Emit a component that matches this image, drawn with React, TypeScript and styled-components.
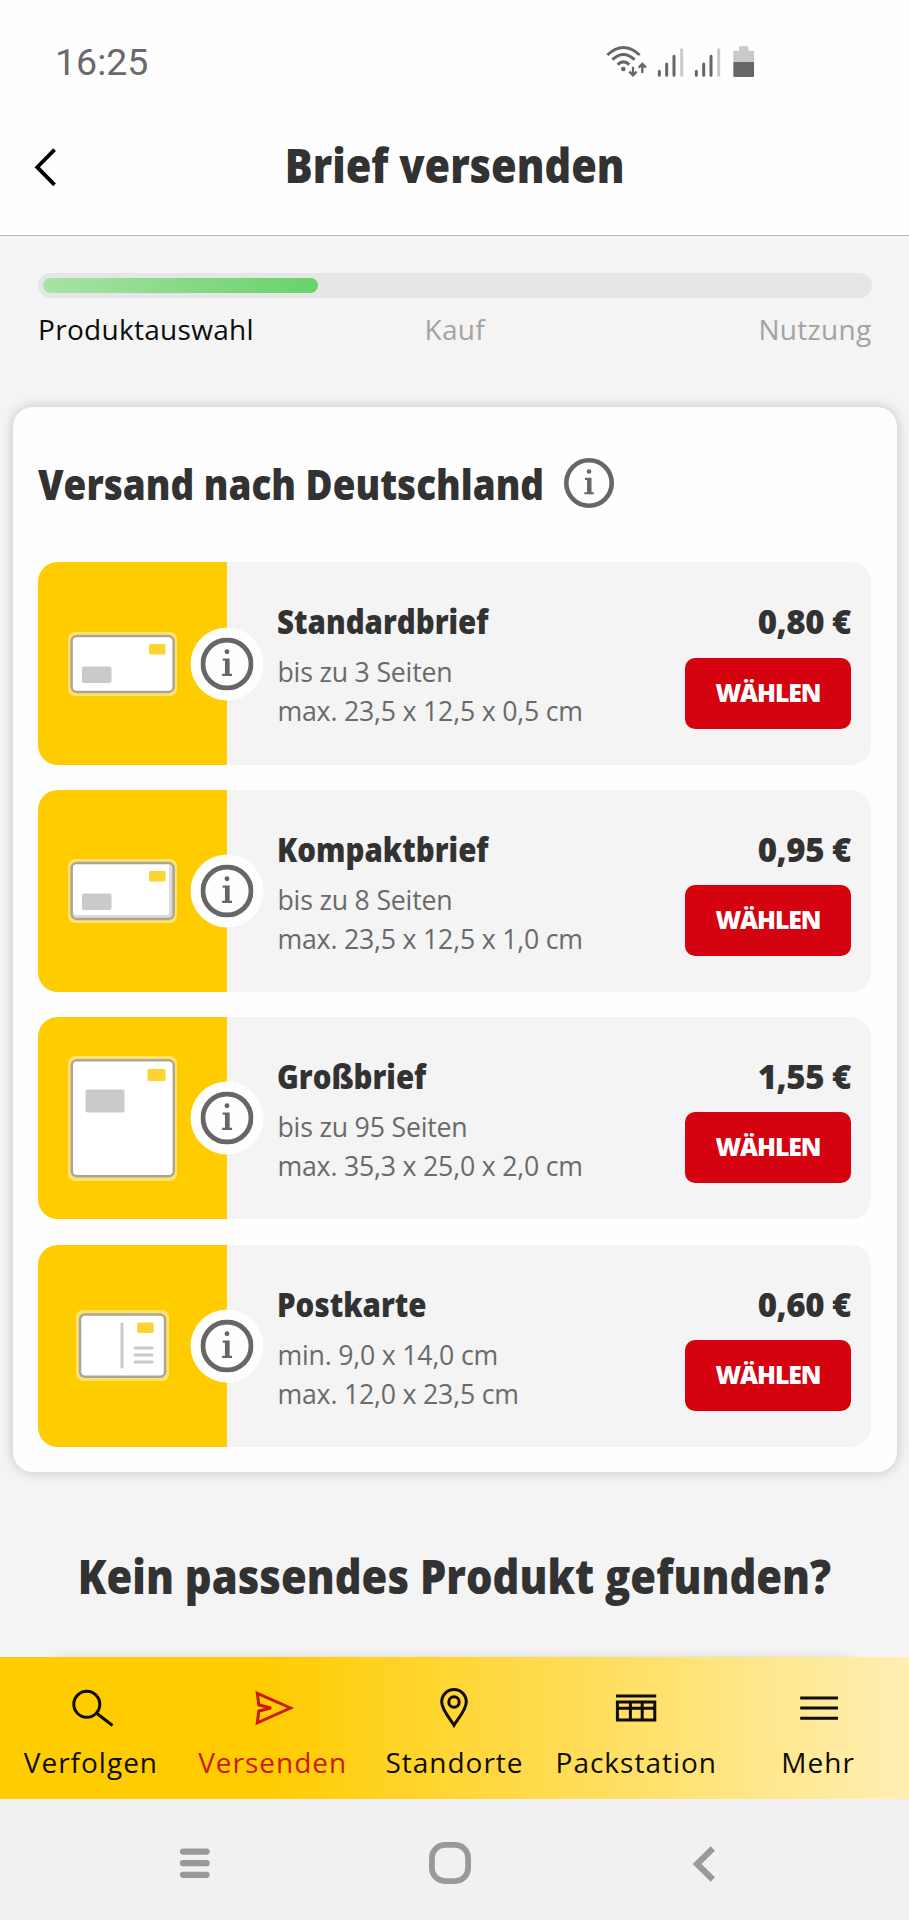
import React from 'react';
import styled, { createGlobalStyle } from 'styled-components';

const GlobalStyle = createGlobalStyle`
  *, *::before, *::after { box-sizing: border-box; }
  body {
    margin: 0;
    background: #f4f4f4;
    font-family: 'Open Sans', 'Noto Sans', sans-serif;
    color: #323232;
  }
  h1, h2, h3, p, ul { margin: 0; padding: 0; }
  svg { display: block; flex: none; }
`;

const Screen = styled.div`
  width: 909px;
  height: 1920px;
  display: flex;
  flex-direction: column;
  overflow: hidden;
  background: #f4f4f4;
`;

const StatusBar = styled.div`
  flex: none;
  height: 100px;
  padding: 24px 152px 0 55px;
  display: flex;
  align-items: center;
  justify-content: space-between;
  background: #fefefe;
`;

const Clock = styled.span`
  font: 400 37.5px/44px Roboto, sans-serif;
  color: #6a6a6a;
`;

const Header = styled.header`
  flex: none;
  height: 136px;
  padding: 0 34px;
  display: grid;
  grid-template-columns: 1fr auto 1fr;
  align-items: center;
  background: #fefefe;
  border-bottom: 1px solid #b5b5b5;
`;

const BackButton = styled.button`
  justify-self: start;
  padding: 0;
  border: 0;
  background: none;
`;

const Title = styled.h1`
  padding-bottom: 6px;
  font-size: 48px;
  line-height: 60px;
  font-weight: 800;
  transform: scaleX(0.864);
`;

const Content = styled.main`
  flex: 1;
  min-height: 0;
  overflow: hidden;
`;

const Progress = styled.section`
  padding: 36.7px 37.5px 0 38px;
`;

const Track = styled.div`
  height: 25.4px;
  padding: 5px;
  border-radius: 13px;
  background: #e6e6e6;
`;

const Fill = styled.div`
  width: 275px;
  height: 15.4px;
  border-radius: 8px;
  background: linear-gradient(90deg, #a8e2a8, #68d268);
`;

const Steps = styled.div`
  margin-top: 11px;
  display: grid;
  grid-template-columns: 1fr 1fr 1fr;
`;

const Step = styled.span<{ $active?: boolean; $align: string }>`
  font-size: 28px;
  line-height: 40px;
  letter-spacing: 0.3px;
  text-align: ${p => p.$align};
  color: ${p => (p.$active ? '#0c0c0c' : '#a3a3a3')};
`;

const Card = styled.section`
  margin: 58.4px 12.3px 0 12.7px;
  padding: 0 25.3px 25.5px;
  border-radius: 20px;
  background: #fefefe;
  box-shadow: 0 0 13px rgba(0, 0, 0, 0.2);
`;

const CardHeader = styled.div`
  height: 155px;
  padding-bottom: 3px;
  display: flex;
  align-items: center;
  gap: 20px;
`;

const CardTitle = styled.h2`
  margin-right: -70px;
  padding-top: 2px;
  font-size: 42px;
  line-height: 56px;
  font-weight: 800;
  white-space: nowrap;
  transform: scaleX(0.878);
  transform-origin: left;
`;

const ProductList = styled.div`
  display: flex;
  flex-direction: column;
  gap: 25.3px;
`;

const Product = styled.article`
  height: 202.1px;
  display: flex;
  border-radius: 20px;
  background: #f4f4f4;
`;

const Thumb = styled.div`
  position: relative;
  width: 189.5px;
  padding-right: 20px;
  display: flex;
  align-items: center;
  justify-content: center;
  border-radius: 20px 0 0 20px;
  background: #ffcc00;
`;

const InfoBadge = styled.button`
  position: absolute;
  top: 50%;
  right: 0;
  width: 73px;
  height: 73px;
  padding: 0;
  display: flex;
  align-items: center;
  justify-content: center;
  border: 0;
  border-radius: 50%;
  background: #fefefe;
  transform: translate(50%, -50%);
`;

const Details = styled.div`
  flex: 1;
  padding: 30px 0 0 50px;
`;

const Name = styled.h3`
  font-size: 33px;
  line-height: 60px;
  font-weight: 800;
  transform: scaleX(0.893);
  transform-origin: left;
`;

const Spec = styled.p`
  font-size: 26.7px;
  line-height: 39px;
  letter-spacing: -0.2px;
  color: #6a6a6a;
`;

const Purchase = styled.div`
  padding: 30px 20.5px 0 0;
  display: flex;
  flex-direction: column;
  align-items: flex-end;
`;

const Price = styled.span`
  font-size: 33px;
  line-height: 60px;
  font-weight: 800;
  letter-spacing: -0.5px;
`;

const ChooseButton = styled.button`
  width: 166px;
  height: 71px;
  margin-top: 5.2px;
  padding: 0 0 3px;
  border: 0;
  border-radius: 10px;
  background: #d5020f;
  color: #fff;
  font: 800 24.8px/40px 'Open Sans', sans-serif;
  letter-spacing: -1.1px;
`;

const Question = styled.h2`
  margin-top: 74px;
  font-size: 47px;
  line-height: 60px;
  font-weight: 800;
  text-align: center;
  transform: scaleX(0.889);
`;

const NextCard = styled.section`
  height: 120px;
  margin: 54px 50px 0;
  border-radius: 20px;
  background: #fefefe;
  box-shadow: 0 0 13px rgba(0, 0, 0, 0.2);
`;

const TabBar = styled.nav`
  position: relative;
  flex: none;
  height: 141.5px;
  display: grid;
  grid-template-columns: repeat(5, 1fr);
  background: linear-gradient(90deg, #ffcc00 29%, #ffefb4 100%);
`;

const Tab = styled.a<{ $active?: boolean }>`
  padding-top: 26.7px;
  display: flex;
  flex-direction: column;
  align-items: center;
  gap: 10.7px;
  color: ${p => (p.$active ? '#cc1a0a' : '#0f0c00')};
`;

const TabLabel = styled.span`
  font-size: 28px;
  line-height: 40px;
  letter-spacing: 1px;
  white-space: nowrap;
`;

const SystemBar = styled.div`
  flex: none;
  height: 121.5px;
  padding: 7px 9.6px 0 0;
  display: flex;
  align-items: center;
  justify-content: center;
  gap: 212.5px;
  background: #f1f1f1;
`;

function StatusIcons() {
  const signal = (x: number) => (
    <g strokeWidth="9" strokeLinecap="round">
      <path d={`M${x} 121V133M${x + 22} 99V133M${x + 44} 76V133`} stroke="#666" />
      <path d={`M${x + 67} 56V133`} stroke="#c9c9c9" />
    </g>
  );
  return (
    <svg width="151.7" height="36.7" viewBox="45 39 455 110" fill="none">
      <g stroke="#666" strokeWidth="9">
        <path d="M52 72Q100 27 149 72M67 86Q100 55 134 86M83 101Q100 84 118 101" />
        <path d="M129 107V132M118 122L129 133L140 122M157 126V99M146 110L157 99L168 110" strokeWidth="7" />
      </g>
      <circle cx="100" cy="114" r="7" fill="#666" />
      {signal(208)}
      {signal(319)}
      <path d="M447 46H475V59H492V93H430V59H447Z" fill="#c9c9c9" />
      <path d="M430 93H492V134Q492 138 488 138H434Q430 138 430 134Z" fill="#666" />
    </svg>
  );
}

function InfoIcon({ size }: { size: number }) {
  return (
    <svg width={size} height={size} viewBox="0 0 52 52" fill="#666">
      <circle cx="26" cy="26" r="23.6" fill="none" stroke="#666" strokeWidth="4.8" />
      <circle cx="26" cy="14" r="2.4" />
      <path d="M21.8 20.6H28.6V35.5H31V37.8H21.2V35.5H24V22.9H21.8Z" />
    </svg>
  );
}

function Envelope({ thick }: { thick?: boolean }) {
  return (
    <svg width="109" height="64" viewBox="0 0 109 64">
      <rect width="109" height="64" rx="7" fill="#ffe26b" />
      <rect x="3.6" y="4.1" width="102" height="55.8" rx="5" fill={thick ? '#dcdcdc' : '#fff'} stroke="#aaa596" strokeWidth="2.5" />
      {thick && <path d="M8 5.4H101V53Q101 56 98 56H8Q5 56 5 53V9Q5 5.4 8 5.4Z" fill="#fff" />}
      <rect x="81" y="12" width="16.5" height="10.5" rx="1.5" fill="#fdd331" />
      <rect x="14" y="34.5" width="29.5" height="16.5" rx="2" fill="#cacaca" />
    </svg>
  );
}

function LargeEnvelope() {
  return (
    <svg width="109" height="125" viewBox="0 0 109 125">
      <rect width="109" height="125" rx="7" fill="#ffe26b" />
      <rect x="3.8" y="4.3" width="102" height="116" rx="5" fill="#fff" stroke="#aaa596" strokeWidth="2.5" />
      <rect x="79.5" y="13" width="18" height="12" rx="1.5" fill="#fdd331" />
      <rect x="17.5" y="33.5" width="39" height="23" rx="2" fill="#cacaca" />
    </svg>
  );
}

function Postcard() {
  return (
    <svg width="93" height="71" viewBox="0 0 93 71">
      <rect width="93" height="71" rx="7" fill="#ffe26b" />
      <rect x="4" y="4.4" width="85" height="62.4" rx="5" fill="#fff" stroke="#aaa596" strokeWidth="2.5" />
      <rect x="61.2" y="12.5" width="16.5" height="10.5" rx="1.5" fill="#fdd331" />
      <path d="M46 14V57M59 38H76M59 45H76M59 52H76" stroke="#cacaca" strokeWidth="3" strokeLinecap="round" />
    </svg>
  );
}

const products = [
  { name: 'Standardbrief', specs: ['bis zu 3 Seiten', 'max. 23,5 x 12,5 x 0,5 cm'], price: '0,80 €', image: <Envelope /> },
  { name: 'Kompaktbrief', specs: ['bis zu 8 Seiten', 'max. 23,5 x 12,5 x 1,0 cm'], price: '0,95 €', image: <Envelope thick /> },
  { name: 'Großbrief', specs: ['bis zu 95 Seiten', 'max. 35,3 x 25,0 x 2,0 cm'], price: '1,55 €', image: <LargeEnvelope /> },
  { name: 'Postkarte', specs: ['min. 9,0 x 14,0 cm', 'max. 12,0 x 23,5 cm'], price: '0,60 €', image: <Postcard /> },
];

const tabs = [
  { label: 'Verfolgen', icon: <><circle cx="19.8" cy="20.3" r="13" /><path d="M29.3 29L45.5 41.5" /></> },
  { label: 'Versenden', active: true, icon: <path d="M8.3 9.3L41.5 24L8.3 38.8L9.9 27L22 24L9.9 21Z" /> },
  { label: 'Standorte', icon: <><path d="M24 41.2C20 34.5 11.7 26 11.7 17.8A12.3 12.3 0 0 1 36.3 17.8C36.3 26 28 34.5 24 41.2Z" /><circle cx="24" cy="18" r="5.2" /></> },
  { label: 'Packstation', icon: <path d="M4 12H44.2M5.4 18H42.8V36H5.4ZM18.4 18V36M30.2 18V36M5.4 24.3H42.8" /> },
  { label: 'Mehr', icon: <path d="M6.2 14H44M6.2 24.1H44M6.2 34.2H44" /> },
];

export default function App() {
  return (
    <Screen>
      <GlobalStyle />
      <StatusBar>
        <Clock>16:25</Clock>
        <StatusIcons />
      </StatusBar>
      <Header>
        <BackButton aria-label="Zurück">
          <svg width="24" height="40" viewBox="0 0 24 40" fill="none" stroke="#000" strokeWidth="3.8">
            <path d="M20.6 1.6L3.2 19.2L20.6 36.8" />
          </svg>
        </BackButton>
        <Title>Brief versenden</Title>
      </Header>
      <Content>
        <Progress>
          <Track><Fill /></Track>
          <Steps>
            <Step $active $align="left">Produktauswahl</Step>
            <Step $align="center">Kauf</Step>
            <Step $align="right">Nutzung</Step>
          </Steps>
        </Progress>
        <Card>
          <CardHeader>
            <CardTitle>Versand nach Deutschland</CardTitle>
            <InfoIcon size={50} />
          </CardHeader>
          <ProductList>
            {products.map(p => (
              <Product key={p.name}>
                <Thumb>
                  {p.image}
                  <InfoBadge aria-label="Info"><InfoIcon size={53} /></InfoBadge>
                </Thumb>
                <Details>
                  <Name>{p.name}</Name>
                  {p.specs.map(s => <Spec key={s}>{s}</Spec>)}
                </Details>
                <Purchase>
                  <Price>{p.price}</Price>
                  <ChooseButton>WÄHLEN</ChooseButton>
                </Purchase>
              </Product>
            ))}
          </ProductList>
        </Card>
        <Question>Kein passendes Produkt gefunden?</Question>
        <NextCard />
      </Content>
      <TabBar>
        {tabs.map(t => (
          <Tab key={t.label} $active={t.active}>
            <svg width="48" height="48" viewBox="0 0 48 48" fill="none" stroke="currentColor" strokeWidth="3">{t.icon}</svg>
            <TabLabel>{t.label}</TabLabel>
          </Tab>
        ))}
      </TabBar>
      <SystemBar>
        <svg width="42" height="42" viewBox="0 0 42 42" stroke="#999" strokeWidth="6.2" strokeLinecap="round">
          <path d="M9 9.6H32.6M9 21.2H32.6M9 32.8H32.6" />
        </svg>
        <svg width="42" height="42" viewBox="0 0 42 42" fill="none" stroke="#999" strokeWidth="5.8">
          <rect x="2.9" y="2.9" width="36.2" height="36.2" rx="13" />
        </svg>
        <svg width="42" height="42" viewBox="0 0 42 42" fill="none" stroke="#999" strokeWidth="6">
          <path d="M29.8 6.5L14 22L29.8 37.5" />
        </svg>
      </SystemBar>
    </Screen>
  );
}
